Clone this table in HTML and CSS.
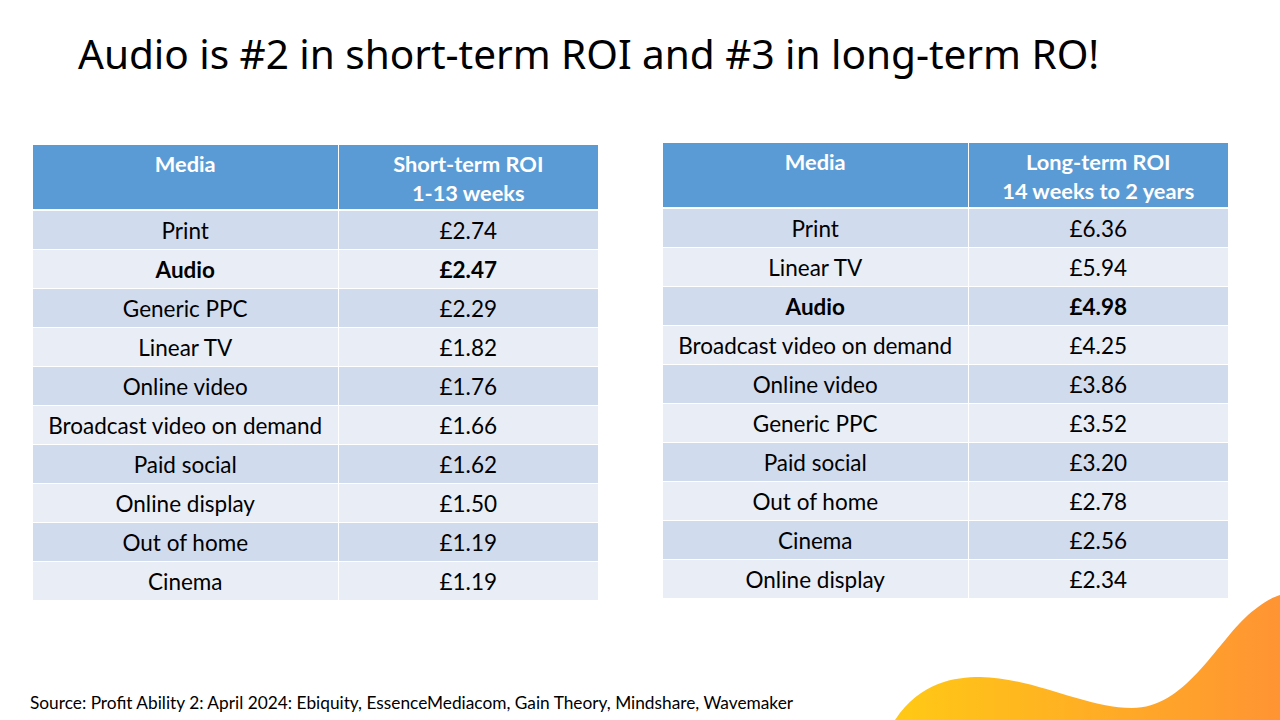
FILE: index.html
```
<!DOCTYPE html>
<html>
<head>
<meta charset="utf-8">
<link rel="stylesheet" href="styles.css">
</head>
<body>
<div class="slide">
  <h1 class="title">Audio is #2 in short-term ROI and #3 in long-term RO!</h1>
  <div class="tables">
    <table class="roi roi-left">
      <colgroup><col class="c1"><col class="c2"></colgroup>
      <thead>
        <tr><th>Media</th><th>Short-term ROI<br>1-13 weeks</th></tr>
      </thead>
      <tbody>
        <tr><td>Print</td><td>£2.74</td></tr>
        <tr class="hl"><td>Audio</td><td>£2.47</td></tr>
        <tr><td>Generic PPC</td><td>£2.29</td></tr>
        <tr><td>Linear TV</td><td>£1.82</td></tr>
        <tr><td>Online video</td><td>£1.76</td></tr>
        <tr><td>Broadcast video on demand</td><td>£1.66</td></tr>
        <tr><td>Paid social</td><td>£1.62</td></tr>
        <tr><td>Online display</td><td>£1.50</td></tr>
        <tr><td>Out of home</td><td>£1.19</td></tr>
        <tr><td>Cinema</td><td>£1.19</td></tr>
      </tbody>
    </table>
    <table class="roi roi-right">
      <colgroup><col class="c1"><col class="c2"></colgroup>
      <thead>
        <tr><th>Media</th><th>Long-term ROI<br>14 weeks to 2 years</th></tr>
      </thead>
      <tbody>
        <tr><td>Print</td><td>£6.36</td></tr>
        <tr><td>Linear TV</td><td>£5.94</td></tr>
        <tr class="hl"><td>Audio</td><td>£4.98</td></tr>
        <tr><td>Broadcast video on demand</td><td>£4.25</td></tr>
        <tr><td>Online video</td><td>£3.86</td></tr>
        <tr><td>Generic PPC</td><td>£3.52</td></tr>
        <tr><td>Paid social</td><td>£3.20</td></tr>
        <tr><td>Out of home</td><td>£2.78</td></tr>
        <tr><td>Cinema</td><td>£2.56</td></tr>
        <tr><td>Online display</td><td>£2.34</td></tr>
      </tbody>
    </table>
  </div>
  <p class="source">Source: Profit Ability 2: April 2024: Ebiquity, EssenceMediacom, Gain Theory, Mindshare, Wavemaker</p>
  <svg class="wave" viewBox="0 0 400 130" width="400" height="130" aria-hidden="true">
    <defs>
      <linearGradient id="wg" x1="0" y1="0" x2="1" y2="0">
        <stop offset="0" stop-color="#FFC915"/>
        <stop offset="1" stop-color="#FF9433"/>
      </linearGradient>
    </defs>
    <path d="M15 130 C40 92 75 87 100 87 C155 88 205 118 252 118 C305 118 335 55 368 25 C382 13 393 7 400 5 L400 130 Z" fill="url(#wg)"/>
  </svg>
</div>
</body>
</html>
```
FILE: styles.css
```
html, body {
  margin: 0;
  padding: 0;
  background: #ffffff;
}
.slide {
  position: relative;
  width: 1280px;
  height: 720px;
  overflow: hidden;
  display: flex;
  flex-direction: column;
  font-family: Lato, "Liberation Sans", sans-serif;
  color: #000;
}
.title {
  margin: 28px 0 0 78px;
  font-family: "Noto Sans", "Liberation Sans", sans-serif;
  font-weight: 400;
  font-size: 40.6px;
  line-height: 52px;
  letter-spacing: -0.05px;
  white-space: nowrap;
}
.tables {
  display: flex;
  align-items: flex-start;
  gap: 65px;
  margin: 63px 0 0 33px;
}
.roi {
  border-collapse: collapse;
  width: 565px;
  table-layout: fixed;
  font-size: 22.5px;
}
.roi-left { margin-top: 2px; }
.roi .c1 { width: 305px; }
.roi .c2 { width: 260px; }
.roi th {
  background: #5B9BD5;
  color: #fff;
  font-weight: 700;
  font-size: 21.8px;
  height: 65px;
  vertical-align: top;
  padding: 4px 0 0;
  line-height: 29px;
  border: 1px solid #fff;
  border-top: 0;
  border-bottom: 2px solid #fff;
  box-sizing: border-box;
}
.roi td {
  height: 39px;
  padding: 3px 0 0;
  text-align: center;
  vertical-align: middle;
  border: 1px solid #fff;
  box-sizing: border-box;
  line-height: 26px;
}
.roi tr > :first-child { border-left: 0; }
.roi tr > :last-child { border-right: 0; }
.roi tbody tr:nth-child(odd) td { background: #D0DBEE; }
.roi tbody tr:nth-child(even) td { background: #E9EDF6; }
.roi tr.hl td { font-weight: 700; }
.source {
  margin: auto 0 7px 30px;
  font-size: 17.3px;
  line-height: 20px;
}
.wave {
  position: absolute;
  right: 0;
  bottom: 0;
}
```
